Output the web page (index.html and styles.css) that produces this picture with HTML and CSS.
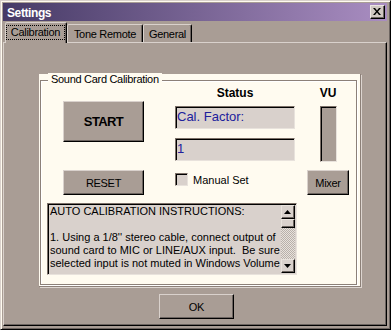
FILE: index.html
```html
<!DOCTYPE html>
<html lang="en">
<head>
    <meta charset="UTF-8">
    <title>Settings</title>
    <link rel="stylesheet" href="styles.css">
</head>
<body>
    <div class="window">
        <div class="titlebar">
            <span class="title">Settings</span>
            <span class="close-btn">
                <svg width="8" height="7" viewBox="0 0 8 7"><path d="M0 0h2l2 2.4 2-2.4h2l-3 3.5 3 3.5h-2l-2-2.4-2 2.4h-2l3-3.5z" fill="#000"/></svg>
            </span>
        </div>

        <div class="tabs">
            <div class="tab tab-active tab-calibration"><span class="focus">Calibration</span></div>
            <div class="tab tab-tone">Tone Remote</div>
            <div class="tab tab-general">General</div>
        </div>

        <div class="panel">
            <div class="card">
                <div class="group">
                    <span class="group-label">Sound Card Calibration</span>

                    <div class="group-top">
                        <div class="col-left">
                            <button class="btn btn-start">START</button>
                            <button class="btn btn-reset">RESET</button>
                        </div>

                        <div class="col-mid">
                            <div class="col-head">Status</div>
                            <div class="field">Cal. Factor:</div>
                            <div class="field field-value">1</div>
                            <label class="check-row"><span class="check"></span>Manual Set</label>
                        </div>

                        <div class="col-right">
                            <div class="col-head">VU</div>
                            <div class="vu"></div>
                            <button class="btn btn-mixer">Mixer</button>
                        </div>
                    </div>

                    <div class="memo">
                        <div class="memo-text">
                            AUTO CALIBRATION INSTRUCTIONS:<br><br>
                            1. Using a 1/8'' stereo cable, connect output of sound card to MIC or LINE/AUX input.&nbsp; Be sure selected input is not muted in Windows Volume
                        </div>
                        <div class="scrollbar">
                            <div class="sb-btn"><svg width="7" height="4" viewBox="0 0 7 4"><path d="M3.5 0L7 4H0z" fill="#000"/></svg></div>
                            <div class="sb-thumb"></div>
                            <div class="sb-track"></div>
                            <div class="sb-btn"><svg width="7" height="4" viewBox="0 0 7 4"><path d="M0 0h7L3.5 4z" fill="#000"/></svg></div>
                        </div>
                    </div>
                </div>
            </div>

            <button class="btn btn-ok">OK</button>
        </div>
    </div>
</body>
</html>
```

FILE: styles.css
```css
body {
    margin: 0;
    background: #a99d95;
    font-family: "Liberation Sans", Arial, sans-serif;
    font-size: 11px;
    color: #000;
}

.window {
    width: 391px;
    height: 330px;
    box-sizing: border-box;
    padding: 2px 3px 3px 2px;
    border: 1px solid;
    border-color: #d9d1cc #000 #000 #d9d1cc;
    box-shadow: inset 1px 1px 0 #fffbf0, inset -1px -1px 0 #6c6460;
    background: #a99d95;
    display: flex;
    flex-direction: column;
}

/* title bar */
.titlebar {
    height: 18px;
    flex-shrink: 0;
    margin-bottom: 1px;
    padding: 0 2px 0 4px;
    background: linear-gradient(to right, #463a66, #a98dc1);
    display: flex;
    align-items: center;
    justify-content: space-between;
}

.title {
    color: #fff;
    font-weight: bold;
    font-size: 12px;
    letter-spacing: -0.4px;
    padding-top: 1px;
}

.close-btn {
    width: 15px;
    height: 14px;
    box-sizing: border-box;
    border: 1px solid;
    border-color: #ece6e2 #000 #000 #ece6e2;
    box-shadow: inset -1px -1px 0 #6c6460;
    background: #d0c8c2;
    display: flex;
    align-items: center;
    justify-content: center;
    padding: 0 1px 1px 0;
}

/* tabs */
.tabs {
    height: 20px;
    flex-shrink: 0;
    padding-left: 2px;
    display: flex;
    align-items: flex-end;
    position: relative;
    z-index: 1;
}

.tab {
    height: 18px;
    box-sizing: border-box;
    border: 1px solid;
    border-bottom: 0;
    border-color: #d9d1cc #000 transparent #d9d1cc;
    border-radius: 2px 2px 0 0;
    box-shadow: inset -1px 0 0 #6c6460;
    background: #a99d95;
    padding-top: 2px;
    line-height: 14px;
    text-align: center;
    letter-spacing: -0.3px;
}

.tab-active {
    height: 21px;
    margin-bottom: -1px;
    padding: 2px 1px 0 0;
}

.focus {
    display: block;
    height: 15px;
    box-sizing: border-box;
    border: 1px dotted #000;
    line-height: 13px;
}

.tab-calibration { width: 62px; }
.tab-tone { width: 76px; }
.tab-general { width: 49px; }

/* tab page */
.panel {
    flex: 1;
    box-sizing: border-box;
    border: 1px solid;
    border-color: #d9d1cc #000 #000 #d9d1cc;
    box-shadow: inset -1px -1px 0 #6c6460;
    padding: 31px 0 0 35px;
    display: flex;
    flex-direction: column;
    align-items: flex-start;
}

.card {
    width: 322px;
    height: 213px;
    box-sizing: border-box;
    padding-left: 1px;
    background: #fffbf0;
    border-right: 1px solid #8c8078;
    border-bottom: 1px solid #8c8078;
    box-shadow: 1px 1px 0 #ddd5d0;
    display: flex;
    flex-direction: column;
}

.group {
    width: 317px;
    height: 205px;
    margin-top: 6px;
    box-sizing: border-box;
    border: 1px solid #8c8078;
    box-shadow: inset 1px 1px 0 #fff, 1px 1px 0 #fff;
    position: relative;
}

.group-label {
    position: absolute;
    top: -8px;
    left: 7px;
    padding: 0 3px;
    background: #fffbf0;
    line-height: 13px;
    letter-spacing: -0.3px;
}

.group-top {
    display: flex;
    padding: 5px 0 0 22px;
}

.col-left {
    width: 81px;
    display: flex;
    flex-direction: column;
}

.col-mid {
    width: 120px;
    margin-left: 31px;
    display: flex;
    flex-direction: column;
}

.col-right {
    width: 42px;
    margin-left: 12px;
    display: flex;
    flex-direction: column;
    align-items: center;
}

.col-head {
    height: 14px;
    line-height: 14px;
    font-size: 12px;
    font-weight: bold;
    text-align: center;
}

/* buttons */
.btn {
    box-sizing: border-box;
    border: 1px solid;
    border-color: #d9d1cc #000 #000 #d9d1cc;
    box-shadow: inset -1px -1px 0 #6c6460;
    background: #a99d95;
    font-family: "Liberation Sans", Arial, sans-serif;
    font-size: 11px;
    letter-spacing: -0.3px;
    color: #000;
    padding: 0;
    display: flex;
    align-items: center;
    justify-content: center;
}

.btn-start {
    height: 41px;
    margin-top: 15px;
    font-size: 13px;
    font-weight: bold;
    letter-spacing: -0.6px;
}

.btn-reset {
    height: 25px;
    margin-top: 28px;
}

.btn-mixer {
    width: 42px;
    height: 25px;
    margin-top: 8px;
}

.btn-ok {
    width: 75px;
    height: 25px;
    margin: 7px 0 0 120px;
}

/* sunken controls */
.field,
.check,
.vu,
.memo {
    box-sizing: border-box;
    border: 1px solid;
    border-color: #7c7068 #e8e2dc #e8e2dc #7c7068;
    box-shadow: inset 1px 1px 0 #000;
}

.field {
    height: 23px;
    margin-top: 6px;
    padding-left: 1px;
    background: #d9d1cc;
    color: #20209c;
    font-size: 13px;
    line-height: 19px;
}

.field-value {
    margin-top: 9px;
}

.check-row {
    height: 13px;
    margin-top: 12px;
    display: flex;
    align-items: center;
    gap: 5px;
}

.check {
    width: 13px;
    height: 13px;
    background: #d9d1cc;
}

.vu {
    width: 17px;
    height: 56px;
    margin-top: 6px;
    background: #a99d95;
}

.memo {
    width: 250px;
    height: 72px;
    margin: 8px 0 0 6px;
    padding: 1px;
    background: #d9d1cc;
    display: flex;
}

.memo-text {
    flex: 1;
    padding-left: 1px;
    line-height: 13px;
}

.scrollbar {
    width: 14px;
    display: flex;
    flex-direction: column;
}

.sb-btn,
.sb-thumb {
    box-sizing: border-box;
    border: 1px solid;
    border-color: #e8e2dc #000 #000 #e8e2dc;
    box-shadow: inset -1px -1px 0 #6c6460;
    background: #d9d1cc;
}

.sb-btn {
    height: 14px;
    display: flex;
    align-items: center;
    justify-content: center;
    padding: 0 1px 1px 0;
}

.sb-thumb {
    height: 9px;
}

.sb-track {
    flex: 1;
    background: repeating-conic-gradient(#b8b0aa 0 25%, #e8e2dc 0 50%) 0 0 / 2px 2px;
}
```
